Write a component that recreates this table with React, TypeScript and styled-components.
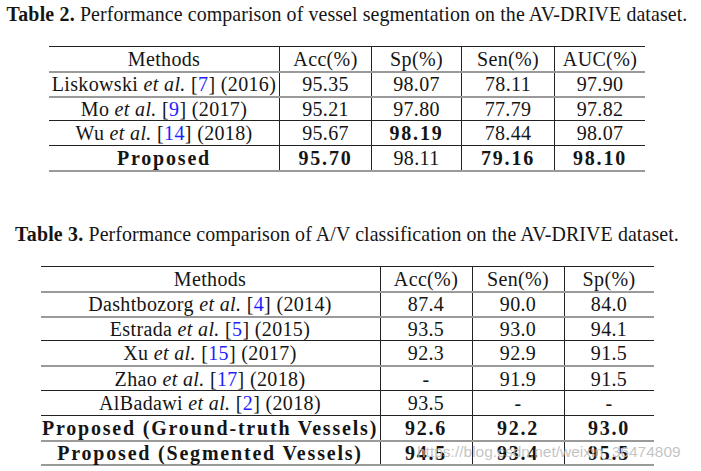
import React from 'react';
import styled, { createGlobalStyle } from 'styled-components';

const serif = '"Liberation Serif", "Times New Roman", "DejaVu Serif", serif';

const Global = createGlobalStyle`
  html, body { margin: 0; padding: 0; background: #fff; }
  body {
    font-family: ${serif};
    color: #151515;
  }
`;

const Page = styled.div`
  position: relative;
  width: 694px;
  height: 471px;
  padding-top: 2px;
  box-sizing: border-box;
  display: flex;
  flex-direction: column;
  align-items: center;
  font-family: ${serif};
`;

const Caption = styled.p<{ $gap: number }>`
  margin: ${(p) => p.$gap}px 0 0;
  font-family: ${serif};
  font-size: 19.9px;
  line-height: 24px;
  letter-spacing: 0.1px;
  white-space: nowrap;
`;

const Label = styled.b`
  font-weight: 700;
  letter-spacing: 0.2px;
`;

const Table = styled.div`
  margin-top: 20px;
  border-bottom: 2px solid #9a9a9a;
`;

type Rule = 'dark' | 'soft';

const Row = styled.div<{ $cols: string; $rule: Rule }>`
  display: grid;
  grid-template-columns: ${(p) => p.$cols};
  height: 24.8px;
  box-sizing: border-box;
  border-top: ${(p) => (p.$rule === 'dark' ? '1px solid #222' : '2px solid #9a9a9a')};
`;

const Cell = styled.div<{ $bold?: boolean }>`
  display: flex;
  align-items: center;
  justify-content: center;
  white-space: nowrap;
  font-family: ${serif};
  font-size: 20px;
  line-height: 20px;
  font-weight: ${(p) => (p.$bold ? 700 : 400)};
  letter-spacing: ${(p) => (p.$bold ? '1.8px' : '0.35px')};
  & + & {
    border-left: 1px solid #222;
  }
`;

const CellText = styled.span`
  white-space: pre;
`;

const Em = styled.i`
  font-style: italic;
`;

const Cite = styled.span`
  color: #1e1eff;
`;

const Watermark = styled.div`
  position: absolute;
  left: 417px;
  top: 443px;
  font-family: "Liberation Sans", Arial, sans-serif;
  font-size: 15.5px;
  line-height: 18px;
  color: rgba(185, 185, 185, 0.85);
  white-space: nowrap;
  pointer-events: none;
`;

type Method = { name: string; ref?: string; year?: string };
type Val = { v: string; b?: boolean };
type DataRow = { method: Method; bold?: boolean; vals: Val[]; rule: Rule };

const MethodText: React.FC<{ m: Method }> = ({ m }) =>
  m.ref ? (
    <CellText>
      {m.name + ' '}
      <Em>et al.</Em>
      {' ['}
      <Cite>{m.ref}</Cite>
      {'] (' + m.year + ')'}
    </CellText>
  ) : (
    <CellText>{m.name}</CellText>
  );

const DataTable: React.FC<{ cols: string; head: string[]; rows: DataRow[] }> = ({ cols, head, rows }) => (
  <Table>
    <Row $cols={cols} $rule="dark">
      {head.map((h) => (
        <Cell key={h}>
          <CellText>{h}</CellText>
        </Cell>
      ))}
    </Row>
    {rows.map((r, i) => (
      <Row key={i} $cols={cols} $rule={r.rule}>
        <Cell $bold={r.bold}>
          <MethodText m={r.method} />
        </Cell>
        {r.vals.map((c, j) => (
          <Cell key={j} $bold={c.b}>
            <CellText>{c.v}</CellText>
          </Cell>
        ))}
      </Row>
    ))}
  </Table>
);

const t2Rows: DataRow[] = [
  { method: { name: 'Liskowski', ref: '7', year: '2016' }, rule: 'soft', vals: [{ v: '95.35' }, { v: '98.07' }, { v: '78.11' }, { v: '97.90' }] },
  { method: { name: 'Mo', ref: '9', year: '2017' }, rule: 'soft', vals: [{ v: '95.21' }, { v: '97.80' }, { v: '77.79' }, { v: '97.82' }] },
  { method: { name: 'Wu', ref: '14', year: '2018' }, rule: 'dark', vals: [{ v: '95.67' }, { v: '98.19', b: true }, { v: '78.44' }, { v: '98.07' }] },
  { method: { name: 'Proposed' }, bold: true, rule: 'dark', vals: [{ v: '95.70', b: true }, { v: '98.11' }, { v: '79.16', b: true }, { v: '98.10', b: true }] },
];

const t3Rows: DataRow[] = [
  { method: { name: 'Dashtbozorg', ref: '4', year: '2014' }, rule: 'soft', vals: [{ v: '87.4' }, { v: '90.0' }, { v: '84.0' }] },
  { method: { name: 'Estrada', ref: '5', year: '2015' }, rule: 'soft', vals: [{ v: '93.5' }, { v: '93.0' }, { v: '94.1' }] },
  { method: { name: 'Xu', ref: '15', year: '2017' }, rule: 'dark', vals: [{ v: '92.3' }, { v: '92.9' }, { v: '91.5' }] },
  { method: { name: 'Zhao', ref: '17', year: '2018' }, rule: 'soft', vals: [{ v: '-' }, { v: '91.9' }, { v: '91.5' }] },
  { method: { name: 'AlBadawi', ref: '2', year: '2018' }, rule: 'dark', vals: [{ v: '93.5' }, { v: '-' }, { v: '-' }] },
  { method: { name: 'Proposed (Ground-truth Vessels)' }, bold: true, rule: 'dark', vals: [{ v: '92.6', b: true }, { v: '92.2', b: true }, { v: '93.0', b: true }] },
  { method: { name: 'Proposed (Segmented Vessels)' }, bold: true, rule: 'soft', vals: [{ v: '94.5', b: true }, { v: '93.4', b: true }, { v: '95.5', b: true }] },
];

export default function App() {
  return (
    <>
      <Global />
      <Page>
        <Caption $gap={0}>
          <Label>Table 2.</Label> Performance comparison of vessel segmentation on the AV-DRIVE dataset.
        </Caption>
        <DataTable
          cols="230px 92px 90px 93px 91px"
          head={['Methods', 'Acc(%)', 'Sp(%)', 'Sen(%)', 'AUC(%)']}
          rows={t2Rows}
        />
        <Caption $gap={50}>
          <Label>Table 3.</Label> Performance comparison of A/V classification on the AV-DRIVE dataset.
        </Caption>
        <DataTable
          cols="339px 92px 92px 90px"
          head={['Methods', 'Acc(%)', 'Sen(%)', 'Sp(%)']}
          rows={t3Rows}
        />
        <Watermark>https://blog.csdn.net/weixin_36474809</Watermark>
      </Page>
    </>
  );
}
